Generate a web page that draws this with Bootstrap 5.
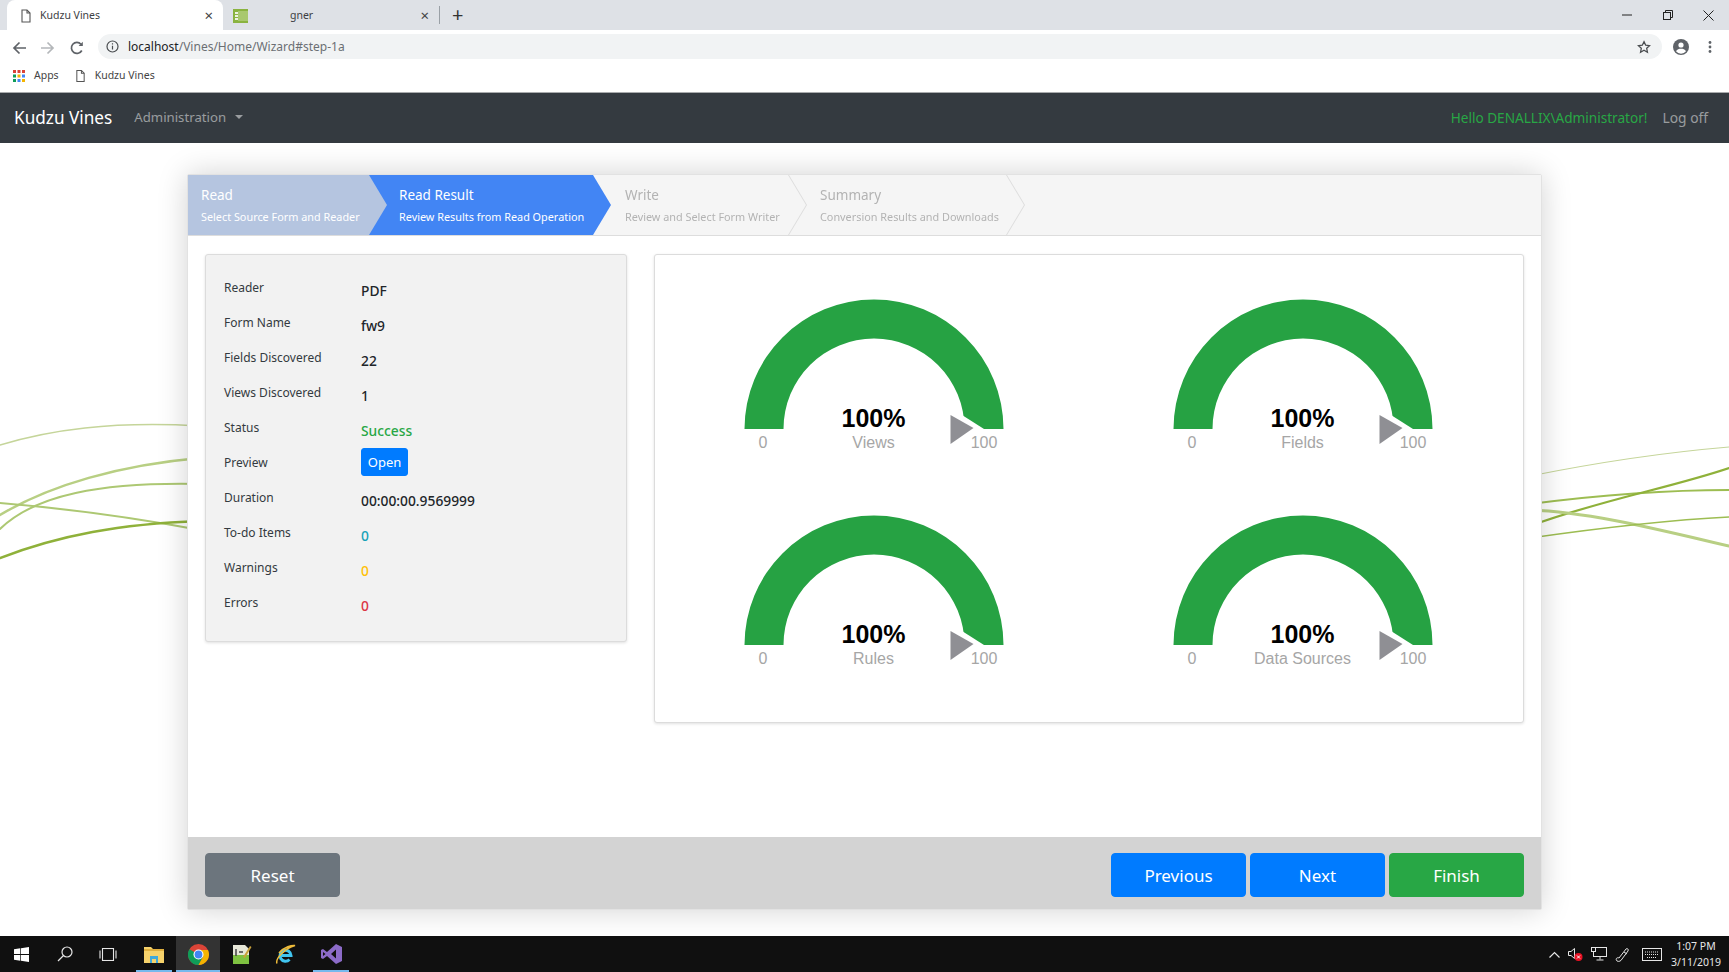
<!DOCTYPE html>
<html lang="en">
<head>
<meta charset="utf-8">
<title>Kudzu Vines</title>
<link href="https://cdn.jsdelivr.net/npm/bootstrap@5.3.0/dist/css/bootstrap.min.css" rel="stylesheet">
<style>
html,body{height:972px;overflow:hidden}
body{font-family:"Noto Sans","Liberation Sans",sans-serif;color:#212529;background:#fff;font-size:14px}
.kv-shell{height:972px}
/* browser chrome */
.kv-tabs{height:30px;background:#dee1e6;padding-left:7px;font-size:10.5px;color:#3c4043}
.kv-tab{width:216px;height:30px;padding:1px 10px 0 13px;border-radius:8px 8px 0 0}
.kv-tab-on{background:#fff}
.kv-tab2{padding-left:10px}
.kv-tab2txt{padding-left:42px}
.kv-tabx{font-size:15px;line-height:1;color:#444}
.kv-sep{width:1px;height:18px;background:#9aa0a6}
.kv-plus{margin-left:12px;margin-right:auto;font-size:20px;line-height:1;color:#333}
.kv-win{width:41px;text-align:center}
.kv-tool{height:33px;padding:0 0 0 12px}
.kv-navicon{width:29px;flex:none}
.kv-navicon3{width:24px}
.kv-addr{width:1564px;height:25px;margin-left:4px;background:#f1f3f4;border-radius:13px;padding:0 11px 0 8px;font-size:12px;color:#6b6f73}
.kv-addr b{font-weight:400;color:#202124}
.kv-url{margin-left:9px;margin-right:auto}
.kv-book{height:30px;padding:0 0 3px 13px;font-size:10.5px;color:#444;border-bottom:1px solid #a9abad}
.kv-gap9{margin-left:9px}
.kv-gap16{margin-left:16px}
.kv-ava{margin-left:11px}
.kv-dots{margin-left:19px}
/* page */
.kv-bar{height:50px;background:#343a40;padding:0 21px 0 14px}
.kv-bar .navbar-brand{font-size:17.2px;color:#fff;padding:0;margin-right:14px}
.kv-bar .nav-link{font-size:13.2px;color:rgba(255,255,255,.5)}
.kv-bar .dropdown-toggle::after{margin-left:9px;border-top-width:4.5px;border-left-width:4.5px;border-right-width:4.5px}
.kv-hello{font-size:13.6px;color:#28a745;margin-right:15px}
.kv-logoff{font-size:13.8px;color:rgba(255,255,255,.5);text-decoration:none}
.kv-stage{display:grid;flex:1 1 auto;min-height:0}
.kv-stage>*{grid-area:1/1}
.kv-vines{width:1729px;height:793px}
.kv-wizard{width:1355px;height:736px;margin:31px auto 0;border:1px solid #e2e2e2;border-radius:2px;box-shadow:0 0 30px rgba(0,0,0,.18);overflow:visible}
.kv-steps{height:61px;background:#f5f5f5;border-bottom:1px solid #ddd;list-style:none;margin:0;padding:0;flex:none}
.kv-step{height:60px;margin-right:-18px;flex:none;filter:drop-shadow(1px 0 0 #dcdcdc)}
.kv-step>div{height:60px;padding-top:10px;clip-path:polygon(0 0,calc(100% - 18px) 0,100% 50%,calc(100% - 18px) 100%,0 100%);background:#f5f5f5;color:#b3b3b3}
.kv-step:nth-child(1){width:199px;z-index:4;filter:none}
.kv-step:nth-child(2){width:242px;z-index:3;filter:none}
.kv-step:nth-child(3){width:213px;z-index:2}
.kv-step:nth-child(4){width:236px;z-index:1}
.kv-step:nth-child(1)>div{background:#b5c5e0;color:#fff;padding-left:13px}
.kv-step:nth-child(2)>div{background:#4285f4;color:#fff;padding-left:30px}
.kv-step:nth-child(3)>div{padding-left:32px}
.kv-step:nth-child(4)>div{padding-left:32px}
.kv-stitle{font-size:13.5px;line-height:20px}
.kv-ssub{font-size:10.85px;line-height:16px;margin-top:4px;white-space:nowrap}
.kv-body{flex:1 1 auto;padding:18px 17px 0;gap:27px;background:#fff}
.kv-info{width:422px;height:388px;background:#f2f2f2;border:1px solid #dcdcdc;border-radius:3px;box-shadow:0 1px 3px rgba(0,0,0,.12);padding:15px 18px 0;flex:none}
.kv-row{height:35px}
.kv-lab{width:137px;padding-top:8px;font-size:12px;line-height:20px;color:#343a40;flex:none}
.kv-val{padding-top:11px;font-size:13.8px;line-height:20px;font-weight:500}
.kv-open{background:#007bff;border-color:#007bff;color:#fff;font-size:13px;line-height:20px;padding:3px 0;height:28px;width:47px;margin-top:3px;border-radius:3px;white-space:nowrap}
.kv-ok{color:#28a745}.kv-todo{color:#17a2b8}.kv-warn{color:#ffc107}.kv-err{color:#dc3545}
.kv-charts{width:870px;height:469px;background:#fff;border:1px solid #dcdcdc;border-radius:3px;box-shadow:0 1px 3px rgba(0,0,0,.12);padding:25px 0 0 2px;grid-template-columns:429px 429px;justify-content:center;align-content:start;flex:none}
.kv-charts svg{width:429px;height:196px;margin-bottom:20px;overflow:visible;display:block}
.kv-gbig{font:700 25px "Liberation Sans",sans-serif;fill:#000;text-anchor:middle}
.kv-gsm{font:400 16px "Liberation Sans",sans-serif;fill:#a6a6a6;text-anchor:middle}
.kv-foot{height:72px;background:#d3d3d3;padding:16px 17px 0;flex:none}
.kv-foot .btn{width:135px;height:44px;font-size:17px;line-height:1;border-radius:4px;color:#fff;padding:0}
.kv-b-prim{background:#007bff;border-color:#007bff}
.kv-b-grey{background:#6c757d;border-color:#6c757d}
.kv-b-ok{background:#28a745;border-color:#28a745}
/* taskbar */
.kv-task{height:36px;background:#101010;color:#e6e6e6;flex:none;padding-right:3px}
.kv-tico{height:36px;display:flex;align-items:center;justify-content:center;flex:none;width:43px}
.kv-tico-u{box-shadow:inset 0 -2px 0 #76b9ed}
.kv-tico-a{background:#333;width:44px;margin-left:4px}
.kv-t-exp{width:36px;margin-left:7px}
.kv-t-ie{margin-left:1px}
.kv-t-vs{width:36px;margin-left:6px}
.kv-clock{font-size:10.5px;line-height:16px;text-align:center;width:60px;margin-left:4px}
</style>
</head>
<body>
<div class="kv-shell d-flex flex-column">

  <!-- browser tabs -->
  <div class="kv-tabs d-flex align-items-center flex-none">
    <div class="kv-tab kv-tab-on d-flex align-items-center">
      <svg width="12" height="14" viewBox="0 0 12 14" fill="none" stroke="#555" stroke-width="1.1"><path d="M2 1h5l3 3v9H2z"/><path d="M7 1v3h3"/></svg>
      <span class="ms-2 flex-grow-1">Kudzu Vines</span>
      <span class="kv-tabx">×</span>
    </div>
    <div class="kv-tab kv-tab2 d-flex align-items-center">
      <svg width="15" height="14" viewBox="0 0 15 14"><rect width="15" height="14" fill="#8ab33f"/><rect x="2" y="3" width="3" height="2" fill="#eef3e0"/><rect x="2" y="6" width="3" height="2" fill="#eef3e0"/><rect x="2" y="9" width="3" height="2" fill="#eef3e0"/><rect x="5" y="2" width="10" height="10" fill="#a9c86e"/></svg>
      <span class="kv-tab2txt flex-grow-1">gner</span>
      <span class="kv-tabx">×</span>
    </div>
    <div class="kv-sep"></div>
    <div class="kv-plus">+</div>
    <div class="kv-win"><svg width="10" height="10" viewBox="0 0 10 10"><path d="M0 5h10" stroke="#222"/></svg></div>
    <div class="kv-win"><svg width="10" height="10" viewBox="0 0 10 10" fill="none" stroke="#222"><rect x=".5" y="2.5" width="7" height="7"/><path d="M2.5 2.500v-2h7v7h-2"/></svg></div>
    <div class="kv-win"><svg width="11" height="11" viewBox="0 0 11 11" stroke="#222"><path d="M.5.5l10 10M10.500.5l-10 10"/></svg></div>
  </div>

  <!-- toolbar -->
  <div class="kv-tool d-flex align-items-center flex-none">
    <div class="kv-navicon"><svg width="14" height="14" viewBox="0 0 14 14" fill="none" stroke="#5f6368" stroke-width="1.7"><path d="M14 7H2M7.500 1.500L2 7l5.500 5.500"/></svg></div>
    <div class="kv-navicon"><svg width="14" height="14" viewBox="0 0 14 14" fill="none" stroke="#b4b7ba" stroke-width="1.7"><path d="M0 7h12M6.500 1.500L12 7l-5.500 5.500"/></svg></div>
    <div class="kv-navicon kv-navicon3"><svg width="14" height="14" viewBox="0 0 14 14" fill="none" stroke="#5f6368" stroke-width="1.7"><path d="M11.800 9.500A5.500 5.500 0 1 1 11 3.200"/><path d="M12.800.8v4.200H8.600" fill="#5f6368" stroke="none"/></svg></div>
    <div class="kv-addr d-flex align-items-center">
      <svg width="13" height="13" viewBox="0 0 13 13" fill="none" stroke="#4a4d50" stroke-width="1.2"><circle cx="6.500" cy="6.500" r="5.500"/><path d="M6.500 5.800v3.700M6.500 3.200v1.300"/></svg>
      <span class="kv-url"><b>localhost</b>/Vines/Home/Wizard#step-1a</span>
      <svg width="14" height="14" viewBox="0 0 24 24" fill="none" stroke="#4a4d50" stroke-width="2.200"><path d="M12 2.800l2.900 6.100 6.600.8-4.900 4.600 1.300 6.600L12 17.600l-5.900 3.300 1.300-6.600L2.500 9.700l6.600-.8z"/></svg>
    </div>
    <svg class="kv-ava" width="16" height="16" viewBox="0 0 16 16"><circle cx="8" cy="8" r="8" fill="#5f6368"/><circle cx="8" cy="6" r="2.600" fill="#fff"/><path d="M3 12.300c1.200-2 3-2.600 5-2.600s3.800.6 5 2.600A6.300 6.300 0 0 1 3 12.300z" fill="#fff"/></svg>
    <svg class="kv-dots" width="4" height="14" viewBox="0 0 4 14" fill="#5f6368"><circle cx="2" cy="2.500" r="1.400"/><circle cx="2" cy="7" r="1.400"/><circle cx="2" cy="11.500" r="1.400"/></svg>
  </div>

  <!-- bookmarks -->
  <div class="kv-book d-flex align-items-center flex-none">
    <svg width="12" height="12" viewBox="0 0 12 12">
      <rect width="3" height="3" fill="#db4437"/><rect x="4.500" width="3" height="3" fill="#db4437"/><rect x="9" width="3" height="3" fill="#db4437"/>
      <rect y="4.500" width="3" height="3" fill="#0f9d58"/><rect x="4.500" y="4.500" width="3" height="3" fill="#f4b400"/><rect x="9" y="4.500" width="3" height="3" fill="#4285f4"/>
      <rect y="9" width="3" height="3" fill="#0f9d58"/><rect x="4.500" y="9" width="3" height="3" fill="#4285f4"/><rect x="9" y="9" width="3" height="3" fill="#f4b400"/>
    </svg>
    <span class="kv-gap9">Apps</span>
    <svg class="kv-gap16" width="11" height="14" viewBox="0 0 12 14" fill="none" stroke="#555" stroke-width="1.100"><path d="M2 1h5l3 3v9H2z"/><path d="M7 1v3h3"/></svg>
    <span class="kv-gap9">Kudzu Vines</span>
  </div>

  <!-- app navbar -->
  <nav class="navbar navbar-expand navbar-dark kv-bar flex-none flex-nowrap">
    <a class="navbar-brand" href="#">Kudzu Vines</a>
    <ul class="navbar-nav me-auto">
      <li class="nav-item dropdown"><a class="nav-link dropdown-toggle" href="#">Administration</a></li>
    </ul>
    <span class="kv-hello">Hello DENALLIX\Administrator!</span>
    <a class="kv-logoff" href="#">Log off</a>
  </nav>

  <!-- page stage -->
  <main class="kv-stage">
    <svg class="kv-vines" viewBox="0 143 1729 793" fill="none" stroke-linecap="round">
      <path d="M0 445C50 430 110 421 200 426" stroke="#c5d59a" stroke-width="1.500"/>
      <path d="M0 515C50 485 120 465 200 458" stroke="#b8cf83" stroke-width="2.500"/>
      <path d="M0 529C35 495 100 482 200 484" stroke="#adc873" stroke-width="2"/>
      <path d="M0 503C60 508 120 515 200 530" stroke="#adc873" stroke-width="2"/>
      <path d="M0 558C60 535 120 524 200 521" stroke="#8fb13a" stroke-width="2.500"/>
      <path d="M1530 476C1600 462 1670 452 1729 447" stroke="#c5d59a" stroke-width="1.200"/>
      <path d="M1530 504C1600 495 1670 490 1729 490" stroke="#9dbd52" stroke-width="1.800"/>
      <path d="M1530 526C1600 500 1670 488 1729 468" stroke="#8fb13a" stroke-width="2.200"/>
      <path d="M1530 510C1590 512 1660 530 1729 546" stroke="#b8cf83" stroke-width="3"/>
      <path d="M1530 538C1600 528 1670 520 1729 517" stroke="#9dbd52" stroke-width="1.500"/>
    </svg>

    <section class="card kv-wizard">
      <ul class="kv-steps d-flex">
        <li class="kv-step"><div><div class="kv-stitle">Read</div><div class="kv-ssub">Select Source Form and Reader</div></div></li>
        <li class="kv-step"><div><div class="kv-stitle">Read Result</div><div class="kv-ssub">Review Results from Read Operation</div></div></li>
        <li class="kv-step"><div><div class="kv-stitle">Write</div><div class="kv-ssub">Review and Select Form Writer</div></div></li>
        <li class="kv-step"><div><div class="kv-stitle">Summary</div><div class="kv-ssub">Conversion Results and Downloads</div></div></li>
      </ul>

      <div class="kv-body d-flex align-items-start">
        <div class="kv-info">
          <div class="kv-row d-flex"><div class="kv-lab">Reader</div><div class="kv-val">PDF</div></div>
          <div class="kv-row d-flex"><div class="kv-lab">Form Name</div><div class="kv-val">fw9</div></div>
          <div class="kv-row d-flex"><div class="kv-lab">Fields Discovered</div><div class="kv-val">22</div></div>
          <div class="kv-row d-flex"><div class="kv-lab">Views Discovered</div><div class="kv-val">1</div></div>
          <div class="kv-row d-flex"><div class="kv-lab">Status</div><div class="kv-val kv-ok">Success</div></div>
          <div class="kv-row d-flex"><div class="kv-lab">Preview</div><div><button class="btn kv-open" type="button">Open</button></div></div>
          <div class="kv-row d-flex"><div class="kv-lab">Duration</div><div class="kv-val">00:00:00.9569999</div></div>
          <div class="kv-row d-flex"><div class="kv-lab">To-do Items</div><div class="kv-val kv-todo">0</div></div>
          <div class="kv-row d-flex"><div class="kv-lab">Warnings</div><div class="kv-val kv-warn">0</div></div>
          <div class="kv-row d-flex"><div class="kv-lab">Errors</div><div class="kv-val kv-err">0</div></div>
        </div>

        <div class="kv-charts d-grid">
          <svg viewBox="0 0 429 196">
            <path d="M83.500 149A129.500 129.500 0 0 1 342.500 149H303.500A90.500 90.500 0 0 0 122.500 149Z" fill="#26a243"/>
            <path d="M301 135L323 149L301 155Z" fill="#fff"/><path d="M289.500 135V164L312.500 148Z" fill="#8f8f94"/>
            <text class="kv-gbig" x="212.500" y="147">100%</text><text class="kv-gsm" x="212.500" y="168">Views</text>
            <text class="kv-gsm" x="102" y="168">0</text><text class="kv-gsm" x="323" y="168">100</text>
          </svg>
          <svg viewBox="0 0 429 196">
            <path d="M83.500 149A129.500 129.500 0 0 1 342.500 149H303.500A90.500 90.500 0 0 0 122.500 149Z" fill="#26a243"/>
            <path d="M301 135L323 149L301 155Z" fill="#fff"/><path d="M289.500 135V164L312.500 148Z" fill="#8f8f94"/>
            <text class="kv-gbig" x="212.500" y="147">100%</text><text class="kv-gsm" x="212.500" y="168">Fields</text>
            <text class="kv-gsm" x="102" y="168">0</text><text class="kv-gsm" x="323" y="168">100</text>
          </svg>
          <svg viewBox="0 0 429 196">
            <path d="M83.500 149A129.500 129.500 0 0 1 342.500 149H303.500A90.500 90.500 0 0 0 122.500 149Z" fill="#26a243"/>
            <path d="M301 135L323 149L301 155Z" fill="#fff"/><path d="M289.500 135V164L312.500 148Z" fill="#8f8f94"/>
            <text class="kv-gbig" x="212.500" y="147">100%</text><text class="kv-gsm" x="212.500" y="168">Rules</text>
            <text class="kv-gsm" x="102" y="168">0</text><text class="kv-gsm" x="323" y="168">100</text>
          </svg>
          <svg viewBox="0 0 429 196">
            <path d="M83.500 149A129.500 129.500 0 0 1 342.500 149H303.500A90.500 90.500 0 0 0 122.500 149Z" fill="#26a243"/>
            <path d="M301 135L323 149L301 155Z" fill="#fff"/><path d="M289.500 135V164L312.500 148Z" fill="#8f8f94"/>
            <text class="kv-gbig" x="212.500" y="147">100%</text><text class="kv-gsm" x="212.500" y="168">Data Sources</text>
            <text class="kv-gsm" x="102" y="168">0</text><text class="kv-gsm" x="323" y="168">100</text>
          </svg>
        </div>
      </div>

      <div class="kv-foot d-flex gap-1">
        <button class="btn kv-b-grey me-auto" type="button">Reset</button>
        <button class="btn kv-b-prim" type="button">Previous</button>
        <button class="btn kv-b-prim" type="button">Next</button>
        <button class="btn kv-b-ok" type="button">Finish</button>
      </div>
    </section>
  </main>

  <!-- windows taskbar -->
  <footer class="kv-task d-flex align-items-center">
    <div class="kv-tico"><svg width="15" height="15" viewBox="0 0 15 15" fill="#fff"><path d="M0 2.200l6.300-.9v5.800H0zM7 1.200L15 0v7.100H7zM0 7.900h6.300v5.800L0 12.800zM7 7.900h8V15l-8-1.200z"/></svg></div>
    <div class="kv-tico"><svg width="16" height="16" viewBox="0 0 16 16" fill="none" stroke="#e6e6e6" stroke-width="1.200"><circle cx="10" cy="6" r="5"/><path d="M6.500 9.500L1 15"/></svg></div>
    <div class="kv-tico"><svg width="18" height="13" viewBox="0 0 18 13" fill="none" stroke="#e6e6e6" stroke-width="1.100"><rect x="3.500" y=".5" width="11" height="12"/><path d="M1 2.500v8M17 2.500v8"/></svg></div>
    <div class="kv-tico kv-tico-u kv-t-exp"><svg width="20" height="17" viewBox="0 0 20 17"><path d="M0 1h7l2 2h11v14H0z" fill="#f6d26b"/><rect x="0" y="3" width="20" height="2" fill="#e0b03f"/><rect x="6" y="10" width="8" height="7" fill="#3fa9dc"/><rect x="8" y="13" width="4" height="4" fill="#f6d26b"/></svg></div>
    <div class="kv-tico kv-tico-a kv-tico-u"><svg width="21" height="21" viewBox="0 0 21 21">
      <circle cx="10.500" cy="10.500" r="10.500" fill="#db4437"/>
      <path d="M10.500 10.500L1.400 5.200A10.500 10.500 0 0 0 10.500 21L15.700 11.500z" fill="#0f9d58"/>
      <path d="M10.500 6H20A10.500 10.500 0 0 1 10.500 21L15.300 12.500z" fill="#f4b400"/>
      <circle cx="10.500" cy="10.500" r="5" fill="#fff"/><circle cx="10.500" cy="10.500" r="3.900" fill="#4285f4"/></svg></div>
    <div class="kv-tico"><svg width="20" height="21" viewBox="0 0 20 21"><path d="M1 1h12l4 4v15H1z" fill="#e7e7d8"/><rect x="1" y="11" width="16" height="9" fill="#7fc241"/><path d="M4 5v7M7 8h4" stroke="#444" stroke-width="1.500"/><path d="M11 13L18 2l1.500 1L13 14z" fill="#c9a13b"/></svg></div>
    <div class="kv-tico kv-t-ie"><svg width="21" height="21" viewBox="0 0 21 21" fill="none"><path d="M5 11.500h11A5.500 5.500 0 1 0 14.500 15.500" stroke="#41c5ef" stroke-width="3"/><path d="M2 19.500C0 15 10 4 20 1.500 17 1 9 3 4 9" stroke="#eebb3a" stroke-width="1.500"/></svg></div>
    <div class="kv-tico kv-tico-u kv-t-vs"><svg width="21" height="20" viewBox="0 0 21 20"><path d="M15 0l6 3v14l-6 3L6 12l-4 3-2-1V6l2-1 4 3zM15 5.500L10 10l5 4.500zM2 8v4l2.500-2z" fill="#8c6bc8"/></svg></div>

    <div class="ms-auto d-flex align-items-center gap-2">
      <svg width="11" height="7" viewBox="0 0 11 7" fill="none" stroke="#e6e6e6" stroke-width="1.200"><path d="M.5 6.500l5-5 5 5"/></svg>
      <svg width="15" height="14" viewBox="0 0 15 14"><path d="M.5 4.500h2.500l3.500-3v10l-3.500-3H.5z" fill="none" stroke="#e6e6e6"/><circle cx="10.500" cy="10" r="4" fill="#e81123"/><path d="M9 8.500l3 3M12 8.500l-3 3" stroke="#fff"/></svg>
      <svg width="16" height="14" viewBox="0 0 16 14" fill="none" stroke="#e6e6e6"><rect x="2.500" y=".5" width="13" height="9"/><rect x=".5" y=".5" width="4" height="4" fill="#101010"/><path d="M9 9.500v3M5.500 13h7"/></svg>
      <svg width="15" height="15" viewBox="0 0 15 15" fill="none" stroke="#e6e6e6"><path d="M2 14c-2-2 0-4 2-3l7-9c1-1 3 0 2 2l-6 8c-1 2-3 3-5 2z"/><path d="M9 5l3 2"/></svg>
      <svg class="ms-1" width="20" height="13" viewBox="0 0 20 13" fill="none" stroke="#e6e6e6"><rect x=".5" y=".5" width="19" height="12"/><path d="M3 4h14M3 6.500h14M5 9.500h10" stroke-dasharray="1 1"/></svg>
    </div>
    <div class="kv-clock"><div>1:07 PM</div><div>3/11/2019</div></div>
  </footer>
</div>
<script src="https://cdn.jsdelivr.net/npm/bootstrap@5.3.0/dist/js/bootstrap.bundle.min.js"></script>
</body>
</html>
